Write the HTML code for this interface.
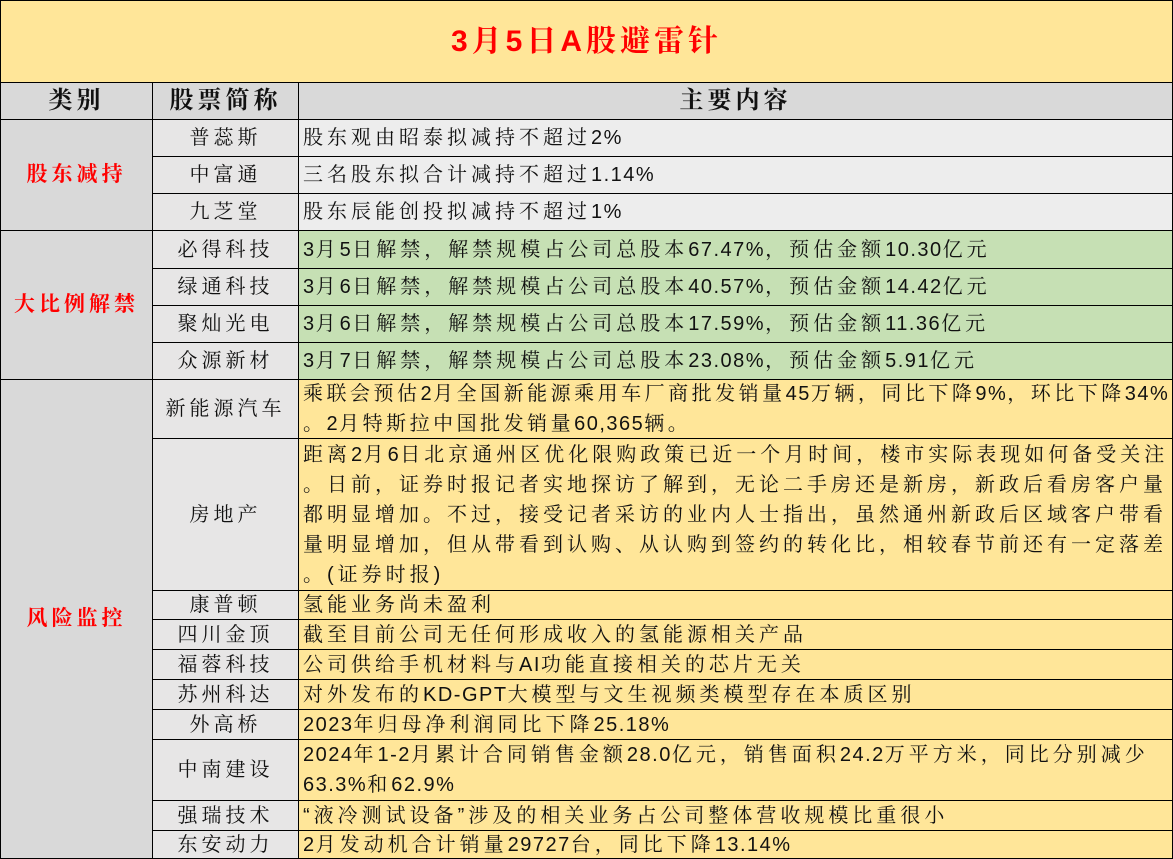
<!DOCTYPE html>
<html><head><meta charset="utf-8"><style>
*{margin:0;padding:0;box-sizing:border-box}
body{width:1173px;height:859px;overflow:hidden;background:#fff;font-family:"Liberation Sans","Noto Serif CJK SC","Noto Sans CJK SC",serif;position:relative}
.c{position:absolute;border:1px solid #000;display:flex;align-items:center;white-space:nowrap;overflow:hidden;font-size:20px;letter-spacing:4px;line-height:30px;color:#111}
.n{letter-spacing:1.5px}
.t{background:#FFE699;color:#f00;font-weight:bold;font-size:30px;justify-content:center;letter-spacing:4px}
.h{background:#D9D9D9;font-weight:bold;font-size:24px;justify-content:center}
.c1{background:#D9D9D9;color:#f00;font-weight:bold;font-size:21px;justify-content:center}
.c2{background:#E7E6E6;justify-content:center}
.gr{background:#EDEDED;padding-left:4px}
.gn{background:#C6E0B4;padding-left:4px}
.y{background:#FFE699;padding-left:4px}
</style></head><body>
<div class="c t" style="left:0;top:0;width:1173px;height:83px">3月5日A股避雷针</div>
<div class="c h" style="left:0;top:82px;width:153px;height:38px">类别</div>
<div class="c h" style="left:152px;top:82px;width:147px;height:38px">股票简称</div>
<div class="c h" style="left:298px;top:82px;width:875px;height:38px">主要内容</div>

<div class="c c1" style="left:0;top:119px;width:153px;height:112px">股东减持</div>
<div class="c c1" style="left:0;top:230px;width:153px;height:150px">大比例解禁</div>
<div class="c c1" style="left:0;top:379px;width:153px;height:480px">风险监控</div>

<div class="c c2" style="left:152px;top:119px;width:147px;height:38px">普蕊斯</div>
<div class="c gr" style="left:298px;top:119px;width:875px;height:38px">股东观由昭泰拟减持不超过<span class="n">2%</span></div>
<div class="c c2" style="left:152px;top:156px;width:147px;height:38px">中富通</div>
<div class="c gr" style="left:298px;top:156px;width:875px;height:38px">三名股东拟合计减持不超过<span class="n">1.14%</span></div>
<div class="c c2" style="left:152px;top:193px;width:147px;height:38px">九芝堂</div>
<div class="c gr" style="left:298px;top:193px;width:875px;height:38px">股东辰能创投拟减持不超过<span class="n">1%</span></div>

<div class="c c2" style="left:152px;top:230px;width:147px;height:39px">必得科技</div>
<div class="c gn" style="left:298px;top:230px;width:875px;height:39px"><span class="n">3</span>月<span class="n">5</span>日解禁，解禁规模占公司总股本<span class="n">67.47%</span>，预估金额<span class="n">10.30</span>亿元</div>
<div class="c c2" style="left:152px;top:268px;width:147px;height:38px">绿通科技</div>
<div class="c gn" style="left:298px;top:268px;width:875px;height:38px"><span class="n">3</span>月<span class="n">6</span>日解禁，解禁规模占公司总股本<span class="n">40.57%</span>，预估金额<span class="n">14.42</span>亿元</div>
<div class="c c2" style="left:152px;top:305px;width:147px;height:38px">聚灿光电</div>
<div class="c gn" style="left:298px;top:305px;width:875px;height:38px"><span class="n">3</span>月<span class="n">6</span>日解禁，解禁规模占公司总股本<span class="n">17.59%</span>，预估金额<span class="n">11.36</span>亿元</div>
<div class="c c2" style="left:152px;top:342px;width:147px;height:38px">众源新材</div>
<div class="c gn" style="left:298px;top:342px;width:875px;height:38px"><span class="n">3</span>月<span class="n">7</span>日解禁，解禁规模占公司总股本<span class="n">23.08%</span>，预估金额<span class="n">5.91</span>亿元</div>

<div class="c c2" style="left:152px;top:379px;width:147px;height:60px">新能源汽车</div>
<div class="c y" style="left:298px;top:379px;width:875px;height:60px;letter-spacing:3.5px"><div>乘联会预估<span class="n">2</span>月全国新能源乘用车厂商批发销量<span class="n">45</span>万辆，同比下降<span class="n">9%</span>，环比下降<span class="n">34%</span><br>。<span class="n">2</span>月特斯拉中国批发销量<span class="n">60,365</span>辆。</div></div>
<div class="c c2" style="left:152px;top:438px;width:147px;height:153px">房地产</div>
<div class="c y" style="left:298px;top:438px;width:875px;height:153px"><div>距离<span class="n">2</span>月<span class="n">6</span>日北京通州区优化限购政策已近一个月时间，楼市实际表现如何备受关注<br>。日前，证券时报记者实地探访了解到，无论二手房还是新房，新政后看房客户量<br>都明显增加。不过，接受记者采访的业内人士指出，虽然通州新政后区域客户带看<br>量明显增加，但从带看到认购、从认购到签约的转化比，相较春节前还有一定落差<br>。(证券时报)</div></div>
<div class="c c2" style="left:152px;top:590px;width:147px;height:30px">康普顿</div>
<div class="c y" style="left:298px;top:590px;width:875px;height:30px">氢能业务尚未盈利</div>
<div class="c c2" style="left:152px;top:619px;width:147px;height:31px">四川金顶</div>
<div class="c y" style="left:298px;top:619px;width:875px;height:31px">截至目前公司无任何形成收入的氢能源相关产品</div>
<div class="c c2" style="left:152px;top:649px;width:147px;height:31px">福蓉科技</div>
<div class="c y" style="left:298px;top:649px;width:875px;height:31px">公司供给手机材料与<span class="n">AI</span>功能直接相关的芯片无关</div>
<div class="c c2" style="left:152px;top:679px;width:147px;height:31px">苏州科达</div>
<div class="c y" style="left:298px;top:679px;width:875px;height:31px">对外发布的<span class="n">KD-GPT</span>大模型与文生视频类模型存在本质区别</div>
<div class="c c2" style="left:152px;top:709px;width:147px;height:31px">外高桥</div>
<div class="c y" style="left:298px;top:709px;width:875px;height:31px"><span class="n">2023</span>年归母净利润同比下降<span class="n">25.18%</span></div>
<div class="c c2" style="left:152px;top:739px;width:147px;height:62px">中南建设</div>
<div class="c y" style="left:298px;top:739px;width:875px;height:62px"><div><span class="n">2024</span>年<span class="n">1-2</span>月累计合同销售金额<span class="n">28.0</span>亿元，销售面积<span class="n">24.2</span>万平方米，同比分别减少<br><span class="n">63.3%</span>和<span class="n">62.9%</span></div></div>
<div class="c c2" style="left:152px;top:800px;width:147px;height:31px">强瑞技术</div>
<div class="c y" style="left:298px;top:800px;width:875px;height:31px">“液冷测试设备”涉及的相关业务占公司整体营收规模比重很小</div>
<div class="c c2" style="left:152px;top:830px;width:147px;height:29px">东安动力</div>
<div class="c y" style="left:298px;top:830px;width:875px;height:29px"><span class="n">2</span>月发动机合计销量<span class="n">29727</span>台，同比下降<span class="n">13.14%</span></div>
</body></html>
